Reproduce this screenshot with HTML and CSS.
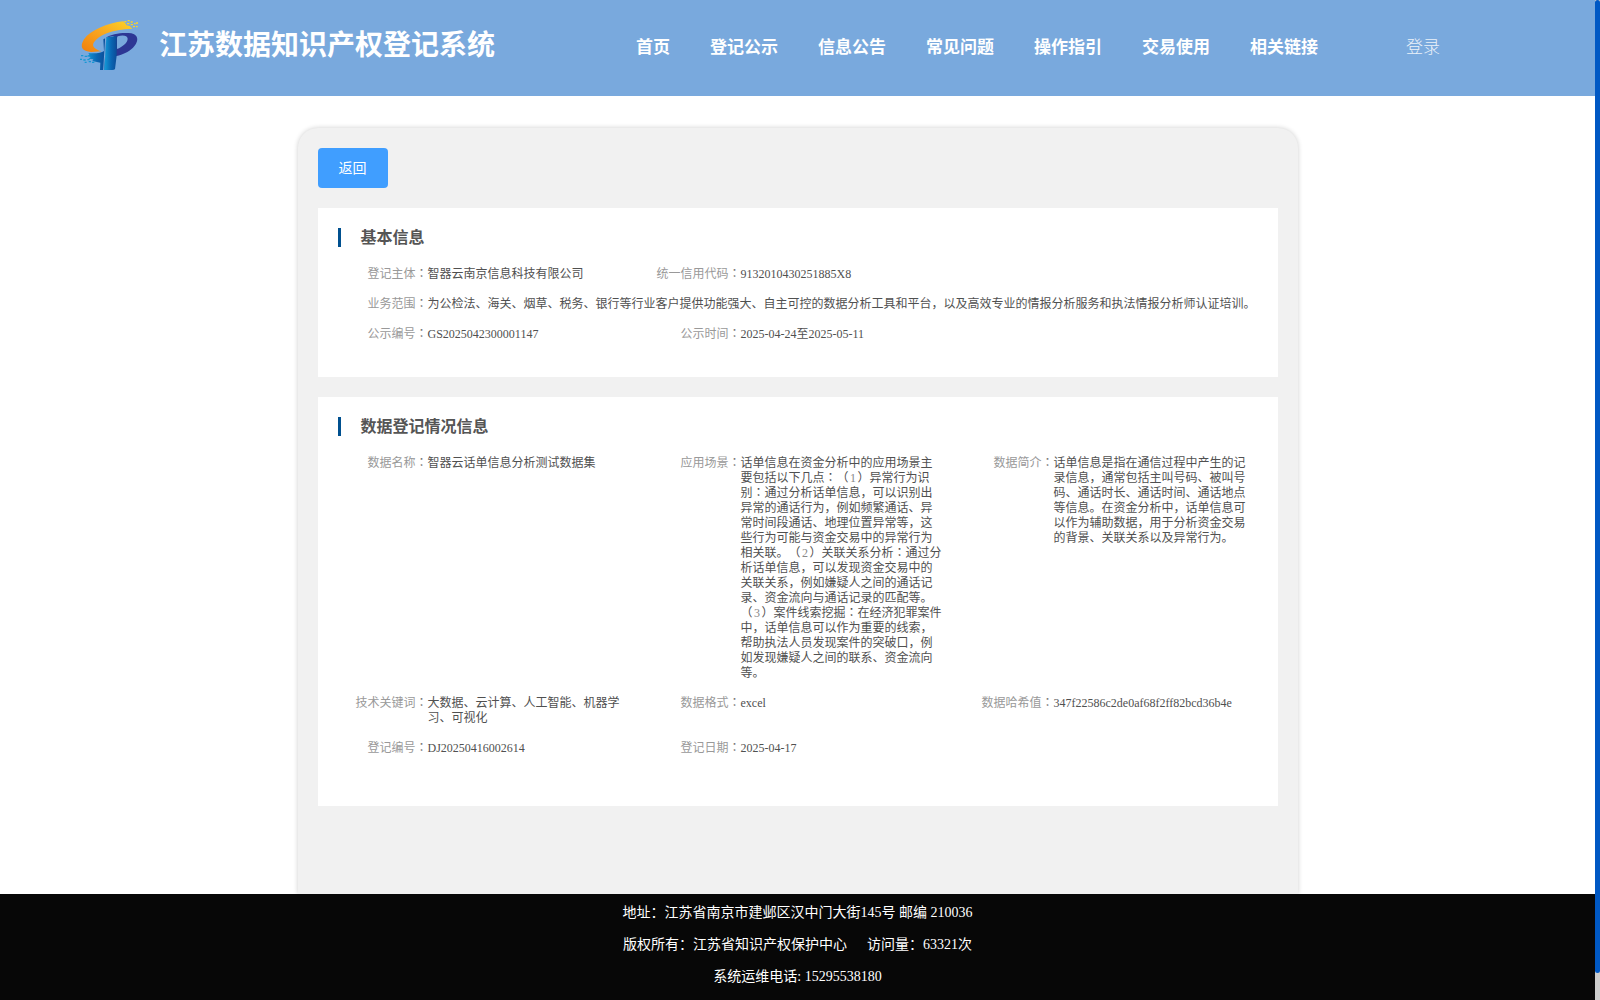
FILE: index.html
```html
<!DOCTYPE html>
<html lang="zh-CN">
<head>
<meta charset="utf-8">
<title>江苏数据知识产权登记系统</title>
<link rel="stylesheet" href="styles.css">
</head>
<body>
<div class="page">
  <header class="header">
    <svg class="logo" viewBox="0 0 240 210" aria-hidden="true">
      <defs>
        <linearGradient id="orange" x1="0" y1="1" x2="1" y2="0"><stop offset="0" stop-color="#f07f0c"/><stop offset=".5" stop-color="#f9a51e"/><stop offset="1" stop-color="#fbd427"/></linearGradient>
        <linearGradient id="blue" x1="0" y1="0" x2="1" y2="0"><stop offset="0" stop-color="#149bd8"/><stop offset=".55" stop-color="#0a66b3"/><stop offset="1" stop-color="#0c4c98"/></linearGradient>
      </defs>
      <path fill="url(#orange)" d="M160 34C112 39 62 60 42 88C28 110 36 125 64 126L94 124C74 118 64 109 72 97C84 77 124 58 187 56L179 48L170 46L166 40Z"/>
      <g fill="#fbd427"><path d="M163 33h6v4h-6zM173 30h6v4h-6zM182 34h6v4h-6zM171 39h7v4h-7zM182 42h7v4h-7zM192 39h5v4h-5zM198 37h6v4h-6zM189 48h6v4h-6zM198 48h5v4h-5z"/></g>
      <path fill="#2d3794" fill-rule="evenodd" d="M107 83C124 72 158 66 184 70C210 76 204 99 189 113C175 126 159 134 135 139L138 84L129 78ZM141 117C158 110 173 98 173 86C172 77 160 74 143 79L141 83Z"/>
      <path fill="url(#blue)" d="M55 129C76 132 94 128 102 123L100 88L107 84L104 180H90L91 158L67 153L70 148L55 146L62 141L49 139L58 134Z"/>
      <path fill="none" stroke="#79a9dd" stroke-width="3" d="M107 84L101 180"/>
      <path fill="url(#blue)" d="M109 82L140 78V137L135 177Q133 180 127 180H103Z"/>
      <g fill="#1798d4"><path d="M33 135h7v4h-7zM44 137h7v4h-7zM30 146h6v4h-6zM40 148h7v4h-7zM52 147h7v4h-7zM44 155h6v4h-6zM56 153h7v4h-7zM66 155h7v4h-7z"/></g>
    </svg>
    <h1 class="site-title">江苏数据知识产权登记系统</h1>
    <nav class="nav"><a>首页</a><a>登记公示</a><a>信息公告</a><a>常见问题</a><a>操作指引</a><a>交易使用</a><a>相关链接</a></nav>
    <a class="login">登录</a>
  </header>

  <main class="content">
    <button class="back">返回</button>
    <section class="panel">
      <h2 class="panel-title">基本信息</h2>
      <div class="fields">
        <div class="field"><div class="label">登记主体<span class="colon" lang="zh-TW">：</span></div><div class="value">智器云南京信息科技有限公司</div></div>
        <div class="field"><div class="label">统一信用代码<span class="colon" lang="zh-TW">：</span></div><div class="value">9132010430251885X8</div></div>
        <div class="field wide"><div class="label">业务范围<span class="colon" lang="zh-TW">：</span></div><div class="value">为公检法、海关、烟草、税务、银行等行业客户提供功能强大、自主可控的数据分析工具和平台，以及高效专业的情报分析服务和执法情报分析师认证培训。</div></div>
        <div class="field"><div class="label">公示编号<span class="colon" lang="zh-TW">：</span></div><div class="value">GS2025042300001147</div></div>
        <div class="field"><div class="label">公示时间<span class="colon" lang="zh-TW">：</span></div><div class="value">2025-04-24至2025-05-11</div></div>
      </div>
    </section>
    <section class="panel panel-data">
      <h2 class="panel-title">数据登记情况信息</h2>
      <div class="fields">
        <div class="field"><div class="label">数据名称<span class="colon" lang="zh-TW">：</span></div><div class="value">智器云话单信息分析测试数据集</div></div>
        <div class="field"><div class="label">应用场景<span class="colon" lang="zh-TW">：</span></div><div class="value">话单信息在资金分析中的应用场景主<br>要包括以下几点<span class="colon" lang="zh-TW">：</span>（<span class="num">1</span>）异常行为识<br>别<span class="colon" lang="zh-TW">：</span>通过分析话单信息，可以识别出<br>异常的通话行为，例如频繁通话、异<br>常时间段通话、地理位置异常等，这<br>些行为可能与资金交易中的异常行为<br>相关联。（<span class="num">2</span>）关联关系分析<span class="colon" lang="zh-TW">：</span>通过分<br>析话单信息，可以发现资金交易中的<br>关联关系，例如嫌疑人之间的通话记<br>录、资金流向与通话记录的匹配等。<br>（<span class="num">3</span>）案件线索挖掘<span class="colon" lang="zh-TW">：</span>在经济犯罪案件<br>中，话单信息可以作为重要的线索，<br>帮助执法人员发现案件的突破口，例<br>如发现嫌疑人之间的联系、资金流向<br>等。</div></div>
        <div class="field"><div class="label">数据简介<span class="colon" lang="zh-TW">：</span></div><div class="value">话单信息是指在通信过程中产生的记<br>录信息，通常包括主叫号码、被叫号<br>码、通话时长、通话时间、通话地点<br>等信息。在资金分析中，话单信息可<br>以作为辅助数据，用于分析资金交易<br>的背景、关联关系以及异常行为。</div></div>
        <div class="field"><div class="label">技术关键词<span class="colon" lang="zh-TW">：</span></div><div class="value">大数据、云计算、人工智能、机器学<br>习、可视化</div></div>
        <div class="field"><div class="label">数据格式<span class="colon" lang="zh-TW">：</span></div><div class="value">excel</div></div>
        <div class="field"><div class="label">数据哈希值<span class="colon" lang="zh-TW">：</span></div><div class="value">347f22586c2de0af68f2ff82bcd36b4e</div></div>
        <div class="field"><div class="label">登记编号<span class="colon" lang="zh-TW">：</span></div><div class="value">DJ20250416002614</div></div>
        <div class="field"><div class="label">登记日期<span class="colon" lang="zh-TW">：</span></div><div class="value">2025-04-17</div></div>
      </div>
    </section>
  </main>

  <footer class="footer">
    <p>地址：江苏省南京市建邺区汉中门大街145号 邮编 210036</p>
    <p>版权所有：江苏省知识产权保护中心<span class="visits">访问量：63321次</span></p>
    <p>系统运维电话: 15295538180</p>
  </footer>
</div>
<div class="scrollbar"><div class="thumb"></div></div>
</body>
</html>
```
FILE: styles.css
```css
* { box-sizing: border-box; }

body {
  margin: 0;
  height: 1000px;
  display: flex;
  overflow: hidden;
  background: #fff;
  font-family: "Liberation Serif", "Noto Sans CJK SC", serif;
  text-spacing-trim: space-all;
}

h1, h2, p { margin: 0; }

.page {
  width: 1595px;
  height: 1000px;
  display: flex;
  flex-direction: column;
}

.header {
  flex: none;
  height: 96px;
  padding-left: 70px;
  display: flex;
  align-items: center;
  background: #79a9dd;
  color: #fff;
  white-space: nowrap;
}

.logo { width: 80px; height: 70px; margin: 0 9px 6px 0; }

.site-title {
  width: 336px;
  margin-bottom: 4px;
  font-size: 28px;
  line-height: 40px;
}

.nav {
  display: flex;
  gap: 40px;
  margin-left: 141px;
  padding-bottom: 1px;
  font-size: 17px;
  line-height: 24px;
  font-weight: bold;
}

.login {
  margin-left: 88px;
  padding-bottom: 1px;
  font-size: 17px;
  line-height: 24px;
  font-weight: 300;
  opacity: .85;
}

.content {
  flex: none;
  width: 1000px;
  height: 766px;
  margin: 32px auto 0;
  padding: 20px;
  display: flex;
  flex-direction: column;
  align-items: stretch;
  gap: 20px;
  border-radius: 20px 20px 0 0;
  background: #f1f1f1;
  box-shadow: 0 0 5px rgba(0, 0, 0, .2);
}

.back {
  align-self: flex-start;
  width: 70px;
  height: 40px;
  padding: 0 0 2px;
  border: 0;
  border-radius: 4px;
  background: #409eff;
  color: #fff;
  font: 14px "Liberation Serif", "Noto Sans CJK SC", serif;
}

.panel {
  height: 169px;
  padding: 20px 0 0 20px;
  background: #fff;
}

.panel-data { height: 409px; }

.panel-title {
  height: 19px;
  padding-left: 20px;
  border-left: 3px solid #00508f;
  font-size: 16px;
  line-height: 19px;
  color: #555;
}

.fields {
  display: grid;
  grid-template-columns: repeat(3, 313px);
  row-gap: 15px;
  margin-top: 20px;
  font-size: 12px;
  line-height: 15px;
}

.field {
  display: flex;
  align-items: flex-start;
  white-space: nowrap;
}

.wide { grid-column: 1 / -1; }

.label {
  flex: none;
  width: 90px;
  text-align: right;
  color: #999;
}

.value { color: #505050; }
.label, .value { height: 100%; }
.colon { font-family: "Noto Sans CJK TC", sans-serif; line-height: 1; }
.label .colon { color: #777; }
.num { padding: 0 1.5px; color: #888; }

.footer {
  position: relative;
  flex: none;
  height: 106px;
  padding-top: 3px;
  background: #070707;
  color: #fff;
  font-size: 14px;
  line-height: 32px;
  text-align: center;
}

.visits { margin-left: 20px; }

.scrollbar {
  width: 5px;
  height: 1000px;
  background: #ccc;
}

.thumb {
  height: 973px;
  border-radius: 3px;
  background: #0058c4;
}
```
